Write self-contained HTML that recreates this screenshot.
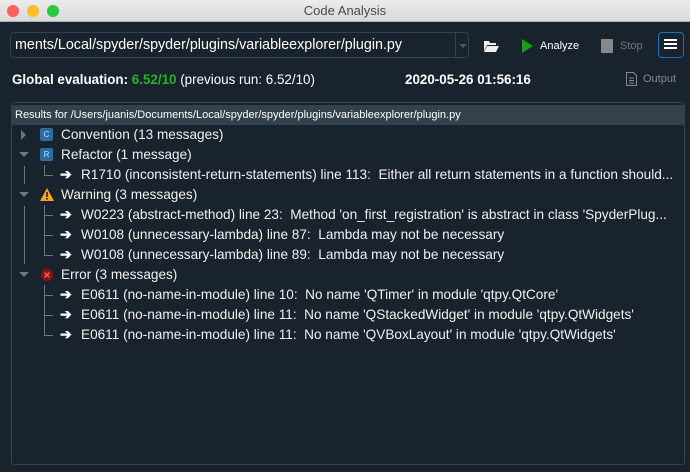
<!DOCTYPE html><html><head><style>
*{margin:0;padding:0;box-sizing:border-box}
body{width:690px;height:472px;background:#19232d;font-family:"Liberation Sans",sans-serif;color:#fff;position:relative;overflow:hidden}
.a{position:absolute;white-space:pre}
.tb{left:0;top:0;width:690px;height:22px;background:linear-gradient(#ececec,#d9d9d9);border-bottom:1px solid #b0b0b0;color:#4a4a4a;font-size:13px;text-align:center;line-height:21px}
.dot{position:absolute;top:5px;width:12px;height:12px;border-radius:50%}
.row{position:absolute;font-size:13.6px;line-height:20px;height:20px;color:#f0f0f0;white-space:pre}
.vl{position:absolute;width:1px;background:#6a7580}
.hl{position:absolute;height:1px;background:#6a7580}
.ar{position:absolute;font-size:14px;font-weight:bold}
.badge{position:absolute;width:13px;height:13px;background:#2d6ca3;border-radius:2px;font-size:8px;color:#cde;text-align:center;line-height:13px}
.tri{position:absolute;width:0;height:0}
</style></head><body>
<div class="a tb">Code Analysis</div>
<div class="dot" style="left:7px;background:#fe5f57"></div>
<div class="dot" style="left:27px;background:#febc2e"></div>
<div class="dot" style="left:47px;background:#28c840"></div>

<div class="a" style="left:10px;top:32px;width:459px;height:26px;border:1px solid #32414b;border-radius:4px;background:#19232d"></div>
<div class="a" style="left:15px;top:36px;font-size:14.3px;line-height:18px;width:438px;overflow:hidden">ments/Local/spyder/spyder/plugins/variableexplorer/plugin.py</div>
<div class="a" style="left:455px;top:33px;width:1px;height:24px;background:#32414b"></div>
<div class="tri" style="left:459px;top:44px;border-left:4px solid transparent;border-right:4px solid transparent;border-top:4px solid #50585f"></div>
<svg class="a" style="left:483px;top:39px" width="16" height="13"><path d="M1 2h5l1 2h6v2H4L1 12z" fill="#eee"/><path d="M4 7h12l-3 6H1z" fill="#eee"/></svg>
<div class="tri" style="left:522px;top:39px;border-top:7px solid transparent;border-bottom:7px solid transparent;border-left:11px solid #1a9b1a"></div>
<div class="a" style="left:540px;top:40px;font-size:11px">Analyze</div>
<div class="a" style="left:601px;top:39px;width:12px;height:14px;background:#888"></div>
<div class="a" style="left:620px;top:40px;font-size:11px;color:#777">Stop</div>
<div class="a" style="left:658px;top:32px;width:26px;height:26px;border:1px solid #1a72bb;border-radius:4px"></div>
<div class="a" style="left:664px;top:39px;width:13px;height:2px;background:#fff;box-shadow:0 4px #fff,0 8px #fff"></div>

<div class="a" style="left:12px;top:72px;font-size:13.4px;font-weight:bold">Global evaluation: <span style="color:#27b327">6.52/10</span> <span style="font-weight:normal">(previous run: 6.52/10)</span></div>
<div class="a" style="left:405px;top:72px;font-size:13.4px;font-weight:bold">2020-05-26 01:56:16</div>
<svg class="a" style="left:626px;top:72px" width="11" height="14"><path d="M.5.5h7l3 3v10H.5z M3 6h5M3 8.5h5M3 11h5" fill="none" stroke="#888"/></svg>
<div class="a" style="left:643px;top:73px;font-size:11px;color:#888">Output</div>

<div class="a" style="left:11px;top:102px;width:674px;height:363px;border:1px solid #32414b;border-radius:3px"></div>
<div class="a" style="left:12px;top:105px;width:672px;height:20px;background:#32414b;font-size:11px;line-height:20px;padding-left:3px">Results for /Users/juanis/Documents/Local/spyder/spyder/plugins/variableexplorer/plugin.py</div>

<div class="tri" style="left:21px;top:130px;border-top:5px solid transparent;border-bottom:5px solid transparent;border-left:5px solid #6a7580"></div>
<div class="badge" style="left:40px;top:128px">C</div>
<div class="row" style="left:61px;top:125px">Convention (13 messages)</div>

<div class="tri" style="left:19px;top:152px;border-left:5px solid transparent;border-right:5px solid transparent;border-top:5px solid #6a7580"></div>
<div class="badge" style="left:40px;top:148px">R</div>
<div class="row" style="left:61px;top:145px">Refactor (1 message)</div>
<div class="vl" style="left:24px;top:166px;height:18px"></div>
<div class="vl" style="left:44px;top:165px;height:10px"></div><div class="hl" style="left:44px;top:175px;width:9px"></div>
<div class="ar" style="left:60px;top:166px">➔</div>
<div class="row" style="left:81px;top:165px">R1710 (inconsistent-return-statements) line 113:  Either all return statements in a function should...</div>

<div class="tri" style="left:19px;top:192px;border-left:5px solid transparent;border-right:5px solid transparent;border-top:5px solid #6a7580"></div>
<svg class="a" style="left:39px;top:187px" width="16" height="15"><path d="M8 1L15 14H1z" fill="#f5a623"/><rect x="7.2" y="5" width="1.6" height="5" fill="#222"/><rect x="7.2" y="11" width="1.6" height="1.6" fill="#222"/></svg>
<div class="row" style="left:61px;top:185px">Warning (3 messages)</div>
<div class="vl" style="left:24px;top:206px;height:58px"></div>
<div class="vl" style="left:44px;top:205px;height:50px"></div>
<div class="hl" style="left:44px;top:215px;width:9px"></div><div class="hl" style="left:44px;top:235px;width:9px"></div><div class="hl" style="left:44px;top:255px;width:9px"></div>
<div class="ar" style="left:60px;top:206px">➔</div><div class="ar" style="left:60px;top:226px">➔</div><div class="ar" style="left:60px;top:246px">➔</div>
<div class="row" style="left:81px;top:205px">W0223 (abstract-method) line 23:  Method 'on_first_registration' is abstract in class 'SpyderPlug...</div>
<div class="row" style="left:81px;top:225px">W0108 (unnecessary-lambda) line 87:  Lambda may not be necessary</div>
<div class="row" style="left:81px;top:245px">W0108 (unnecessary-lambda) line 89:  Lambda may not be necessary</div>

<div class="tri" style="left:19px;top:272px;border-left:5px solid transparent;border-right:5px solid transparent;border-top:5px solid #6a7580"></div>
<svg class="a" style="left:40px;top:268px" width="14" height="14"><circle cx="7" cy="7" r="6" fill="#8e1010"/><path d="M4.5 4.5l5 5M9.5 4.5l-5 5" stroke="#d66" stroke-width="1.5"/></svg>
<div class="row" style="left:61px;top:265px">Error (3 messages)</div>
<div class="vl" style="left:44px;top:285px;height:50px"></div>
<div class="hl" style="left:44px;top:295px;width:9px"></div><div class="hl" style="left:44px;top:315px;width:9px"></div><div class="hl" style="left:44px;top:335px;width:9px"></div>
<div class="ar" style="left:60px;top:286px">➔</div><div class="ar" style="left:60px;top:306px">➔</div><div class="ar" style="left:60px;top:326px">➔</div>
<div class="row" style="left:81px;top:285px">E0611 (no-name-in-module) line 10:  No name 'QTimer' in module 'qtpy.QtCore'</div>
<div class="row" style="left:81px;top:305px">E0611 (no-name-in-module) line 11:  No name 'QStackedWidget' in module 'qtpy.QtWidgets'</div>
<div class="row" style="left:81px;top:325px">E0611 (no-name-in-module) line 11:  No name 'QVBoxLayout' in module 'qtpy.QtWidgets'</div>
</body></html>
